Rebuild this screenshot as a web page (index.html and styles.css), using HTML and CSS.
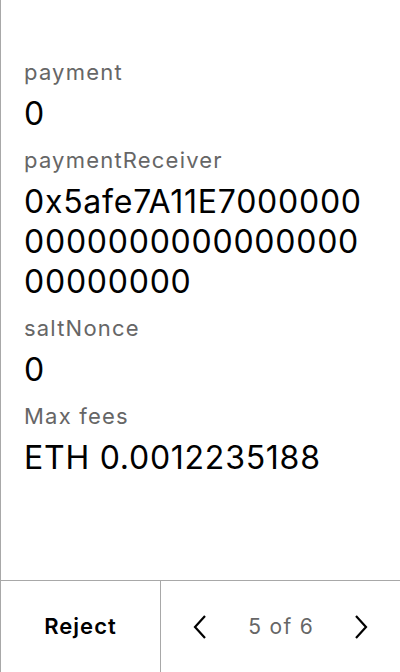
FILE: index.html
```html
<!DOCTYPE html>
<html>
<head>
<meta charset="utf-8">
<link rel="stylesheet" href="styles.css">
</head>
<body>
<div class="screen">
  <main class="content">
    <div class="field">
      <div class="label">payment</div>
      <div class="value">0</div>
    </div>
    <div class="field">
      <div class="label">paymentReceiver</div>
      <div class="value">0x5afe7A11E7000000<br>0000000000000000<br>00000000</div>
    </div>
    <div class="field">
      <div class="label">saltNonce</div>
      <div class="value">0</div>
    </div>
    <div class="field">
      <div class="label">Max fees</div>
      <div class="value">ETH 0.0012235188</div>
    </div>
  </main>
  <footer class="footer">
    <div class="reject">Reject</div>
    <div class="pager">
      <svg class="chev" width="14" height="24" viewBox="0 0 14 24"><path d="M12 1 L2 12 L12 23" fill="none" stroke="#000" stroke-width="2.2"/></svg>
      <span class="count">5 of 6</span>
      <svg class="chev" width="14" height="24" viewBox="0 0 14 24"><path d="M2 1 L12 12 L2 23" fill="none" stroke="#000" stroke-width="2.2"/></svg>
    </div>
  </footer>
</div>
</body>
</html>
```
FILE: styles.css
```css
html, body {
  margin: 0;
  padding: 0;
  background: #fff;
}
body {
  font-family: Inter, "Noto Sans", sans-serif;
  color: #000;
}
.screen {
  width: 400px;
  height: 672px;
  box-sizing: border-box;
  border-left: 1px solid #a8a8a8;
  display: flex;
  flex-direction: column;
}
.content {
  flex: 1;
  padding: 58px 0 0 23px;
  display: flex;
  flex-direction: column;
  gap: 12px;
}
.field {
  display: flex;
  flex-direction: column;
  gap: 8px;
}
.label {
  font-size: 22px;
  line-height: 28px;
  letter-spacing: 1.2px;
  color: #666;
}
.value {
  font-size: 32px;
  line-height: 40px;
  letter-spacing: 0.75px;
  color: #000;
}
.footer {
  height: 91px;
  border-top: 1px solid #a8a8a8;
  display: flex;
}
.reject {
  width: 159px;
  border-right: 1px solid #a8a8a8;
  display: flex;
  align-items: center;
  justify-content: center;
  font-size: 22px;
  font-weight: 600;
  letter-spacing: 1px;
  padding-bottom: 2px;
}
.pager {
  flex: 1;
  display: flex;
  align-items: center;
  justify-content: space-between;
  padding: 0 32px 0 32px;
}
.count {
  font-size: 21px;
  letter-spacing: 1.3px;
  color: #666;
  margin-right: -1.3px;
}
.chev {
  display: block;
}
```
